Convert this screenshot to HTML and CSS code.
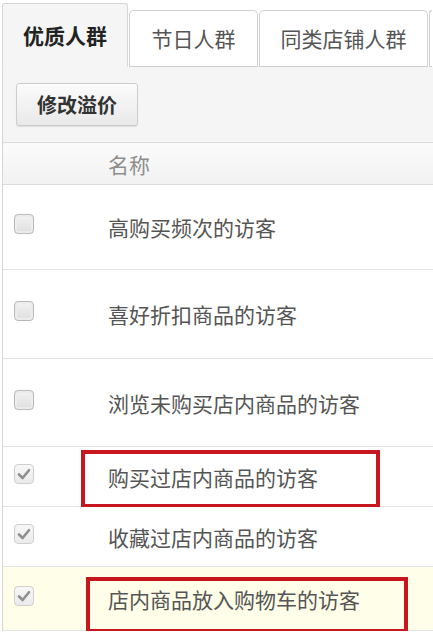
FILE: index.html
```html
<!DOCTYPE html>
<html lang="zh">
<head>
<meta charset="utf-8">
<title>人群</title>
<link rel="stylesheet" href="styles.css">
</head>
<body>
<div class="page">
  <div class="tabs">
    <div class="tab active">优质人群</div>
    <div class="tab t2">节日人群</div>
    <div class="tab t3">同类店铺人群</div>
    <div class="tab t4"></div>
  </div>
  <div class="panel">
    <div class="toolbar">
      <button class="btn">修改溢价</button>
    </div>
    <div class="thead">
      <div class="c-check"></div>
      <div class="c-name">名称</div>
    </div>
    <div class="row r1">
      <div class="c-check"><span class="cb"></span></div>
      <div class="c-name">高购买频次的访客</div>
    </div>
    <div class="row r2">
      <div class="c-check"><span class="cb"></span></div>
      <div class="c-name">喜好折扣商品的访客</div>
    </div>
    <div class="row r3">
      <div class="c-check"><span class="cb"></span></div>
      <div class="c-name">浏览未购买店内商品的访客</div>
    </div>
    <div class="row r4">
      <div class="c-check"><span class="cb checked"><svg viewBox="0 0 20 20" width="20" height="20"><path d="M5 10.5 L8.6 14 L15 6.2" fill="none" stroke="#8f8f8f" stroke-width="2.6" stroke-linecap="round" stroke-linejoin="round"/></svg></span></div>
      <div class="c-name">购买过店内商品的访客</div>
      <div class="mark mark1"></div>
    </div>
    <div class="row r5">
      <div class="c-check"><span class="cb checked"><svg viewBox="0 0 20 20" width="20" height="20"><path d="M5 10.5 L8.6 14 L15 6.2" fill="none" stroke="#8f8f8f" stroke-width="2.6" stroke-linecap="round" stroke-linejoin="round"/></svg></span></div>
      <div class="c-name">收藏过店内商品的访客</div>
    </div>
    <div class="row r6 hl">
      <div class="c-check"><span class="cb checked"><svg viewBox="0 0 20 20" width="20" height="20"><path d="M5 10.5 L8.6 14 L15 6.2" fill="none" stroke="#8f8f8f" stroke-width="2.6" stroke-linecap="round" stroke-linejoin="round"/></svg></span></div>
      <div class="c-name">店内商品放入购物车的访客</div>
      <div class="mark mark2"></div>
    </div>
  </div>
</div>
</body>
</html>
```
FILE: styles.css
```css
html, body {
  margin: 0;
  padding: 0;
  background: #fff;
}
body {
  width: 433px;
  height: 640px;
  overflow: hidden;
  font-family: "Noto Sans CJK SC", "Noto Sans", sans-serif;
  font-size: 21px;
  color: #555;
}
.page {
  padding-left: 2px;
  width: 431px;
  overflow: hidden;
}
.tabs {
  display: flex;
  align-items: flex-end;
  height: 67px;
  box-sizing: border-box;
  padding-top: 3px;
}
.tab {
  box-sizing: border-box;
  display: flex;
  align-items: center;
  justify-content: center;
  flex: none;
  height: 57px;
  background: #fff;
  border: 1px solid #d2d2d2;
  border-bottom: 1px solid #cfcfcf;
  border-radius: 5px 5px 0 0;
  color: #555;
  margin-left: 1px;
  padding-bottom: 2px;
}
.tab.active {
  margin-left: 0;
  width: 126px;
  height: 64px;
  background: #f5f5f5;
  border-color: #d6d6d6;
  border-bottom-color: #f5f5f5;
  border-radius: 3px 3px 0 0;
  color: #222;
  font-weight: bold;
  padding-bottom: 0;
}
.t2 { width: 129px; }
.t3 { width: 169px; }
.t4 {
  width: 3px;
  border-right: none;
  border-radius: 5px 0 0 0;
}
.panel {
  border-left: 1px solid #d6d6d6;
}
.toolbar {
  background: #f5f5f5;
  height: 75px;
  box-sizing: border-box;
  padding: 16px 0 0 13px;
}
.btn {
  width: 122px;
  height: 43px;
  box-sizing: border-box;
  border: 1px solid #cdcdcd;
  border-radius: 3px;
  background: linear-gradient(#fbfbfb, #e9e9e9);
  box-shadow: 0 1px 1px rgba(0,0,0,0.1);
  font-family: "Noto Sans CJK SC", "Noto Sans", sans-serif;
  font-size: 20px;
  font-weight: bold;
  color: #333;
  padding: 0;
}
.thead {
  display: flex;
  align-items: center;
  height: 43px;
  box-sizing: border-box;
  border-top: 1px solid #dcdcdc;
  border-bottom: 1px solid #dcdcdc;
  background: linear-gradient(#fbfbfb, #f2f2f2);
  color: #8e8e8e;
}
.c-check {
  width: 105px;
  flex: none;
  padding-left: 11px;
  box-sizing: border-box;
}
.c-name {
  flex: 1;
  white-space: nowrap;
}
.row {
  position: relative;
  display: flex;
  align-items: center;
  box-sizing: border-box;
  border-bottom: 1px solid #e4e4e4;
  background: #fff;
}
.r1 { height: 85px; }
.r2 { height: 89px; }
.r3 { height: 88px; }
.r4 { height: 60px; }
.r5 { height: 60px; }
.r6 { height: 64px; }
.row.hl { background: #fefee9; }
.cb {
  display: block;
  width: 20px;
  height: 20px;
  box-sizing: border-box;
  border: 1px solid #b9b9b9;
  border-radius: 4px;
  background: linear-gradient(#f3f3f3, #dedede);
  box-shadow: inset 0 0 0 2px #ececec;
  margin-top: -6px;
  position: relative;
}
.cb.checked {
  border-color: #cfcfcf;
  background: linear-gradient(#f7f7f7, #ebebeb);
  box-shadow: none;
}
.cb svg {
  position: absolute;
  left: -1px;
  top: -1px;
}
.mark {
  position: absolute;
  box-sizing: border-box;
  border: 4px solid #c8161f;
}
.mark1 {
  left: 78px;
  top: 3px;
  width: 299px;
  height: 58px;
}
.mark2 {
  left: 83px;
  top: 10px;
  width: 322px;
  height: 56px;
}
```
